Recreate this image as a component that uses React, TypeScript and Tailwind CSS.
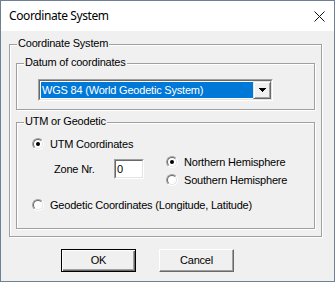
const etched = "relative border border-[#a0a0a0] shadow-[inset_1px_1px_0_#fff,1px_1px_0_#fff]";

function Group({ label, className, children }: { label: string; className: string; children?: React.ReactNode }) {
  return (
    <div className={`${etched} ${className}`}>
      <span className="absolute left-[7px] top-[-8px] bg-[#f0f0f0] px-[1px] leading-[13px]">{label}</span>
      {children}
    </div>
  );
}

function Radio({ checked, label }: { checked?: boolean; label: string }) {
  return (
    <div className="flex h-[12px] items-center gap-[6px]">
      <span className="flex h-[12px] w-[12px] shrink-0 rounded-full border border-t-[#a0a0a0] border-l-[#a0a0a0] border-r-white border-b-white">
        <span className="flex h-[10px] w-[10px] items-center justify-center rounded-full border border-t-[#696969] border-l-[#696969] border-r-[#e3e3e3] border-b-[#e3e3e3] bg-white">
          {checked && <span className="h-[4px] w-[4px] rounded-full bg-black" />}
        </span>
      </span>
      <span className="leading-[13px]">{label}</span>
    </div>
  );
}

function Button({ label, isDefault }: { label: string; isDefault?: boolean }) {
  return (
    <button
      className={
        isDefault
          ? "h-[23px] w-[75px] border border-black bg-[#f0f0f0] leading-[13px] shadow-[inset_1px_1px_0_#fff,inset_-1px_-1px_0_#696969,inset_-2px_-2px_0_#a0a0a0]"
          : "h-[23px] w-[75px] border border-t-white border-l-white border-r-[#696969] border-b-[#696969] bg-[#f0f0f0] leading-[13px] shadow-[inset_-1px_-1px_0_#a0a0a0]"
      }
    >
      {label}
    </button>
  );
}

export default function App() {
  return (
    <div className="flex h-[282px] w-[335px] flex-col border border-[#6e8094] bg-[#f0f0f0] font-['Liberation_Sans',Arial,sans-serif] text-[11px] tracking-[-0.2px] text-black">
      <div className="flex h-[30px] shrink-0 items-center justify-between bg-white pl-[8px] pr-[9px]">
        <span className="font-['Noto_Sans',sans-serif] text-[12px] tracking-[-0.4px]">Coordinate System</span>
        <svg width="11" height="11" viewBox="0 0 11 11" className="mt-[1px]">
          <path d="M0.5 0.5 L10.5 10.5 M10.5 0.5 L0.5 10.5" stroke="#111" strokeWidth="1" />
        </svg>
      </div>

      <div className="flex flex-1 flex-col">
        <Group label="Coordinate System" className="ml-[8px] mt-[13px] h-[193px] w-[313px]">
          <Group label="Datum of coordinates" className="ml-[6px] mt-[18px] h-[47px] w-[299px]">
            <div className="ml-[21px] mt-[15px] flex h-[22px] w-[235px] border border-t-[#a0a0a0] border-l-[#a0a0a0] border-r-white border-b-white">
              <div className="flex flex-1 border border-t-[#696969] border-l-[#696969] border-r-[#e3e3e3] border-b-[#e3e3e3] bg-white">
                <div className="flex flex-1 py-[1px] pl-[1px]">
                  <div className="flex flex-1 items-center bg-[#0078d7] pl-[1px] leading-[13px] text-white">
                    WGS 84 (World Geodetic System)
                  </div>
                </div>
                <div className="flex w-[18px] items-center justify-center border border-t-[#e3e3e3] border-l-[#e3e3e3] border-r-[#696969] border-b-[#696969] bg-[#f0f0f0] shadow-[inset_1px_1px_0_#fff,inset_-1px_-1px_0_#a0a0a0]">
                  <svg width="7" height="4" viewBox="0 0 7 4" shapeRendering="crispEdges">
                    <polygon points="0,0 7,0 3.5,4" fill="#000" />
                  </svg>
                </div>
              </div>
            </div>
          </Group>

          <Group label="UTM or Geodetic" className="ml-[6px] mt-[12px] h-[107px] w-[299px]">
            <div className="flex flex-col pl-[15px]">
              <div className="mt-[15px]">
                <Radio checked label="UTM Coordinates" />
              </div>
              <div className="mt-[6px] flex h-[30px]">
                <div className="flex w-[134px] items-center self-start pl-[22px] pt-[3px]">
                  <span className="w-[60px] leading-[13px]">Zone Nr.</span>
                  <div className="flex h-[20px] w-[30px] border border-t-[#a0a0a0] border-l-[#a0a0a0] border-r-white border-b-white">
                    <div className="flex flex-1 items-center border border-t-[#696969] border-l-[#696969] border-r-[#e3e3e3] border-b-[#e3e3e3] bg-white pl-[1px] leading-[13px]">
                      0
                    </div>
                  </div>
                </div>
                <div className="flex flex-col gap-[6px]">
                  <Radio checked label="Northern Hemisphere" />
                  <Radio label="Southern Hemisphere" />
                </div>
              </div>
              <div className="mt-[13px]">
                <Radio label="Geodetic Coordinates (Longitude, Latitude)" />
              </div>
            </div>
          </Group>
        </Group>

        <div className="mt-[12px] flex gap-[23px] pl-[60px]">
          <Button isDefault label="OK" />
          <Button label="Cancel" />
        </div>
      </div>
    </div>
  );
}
